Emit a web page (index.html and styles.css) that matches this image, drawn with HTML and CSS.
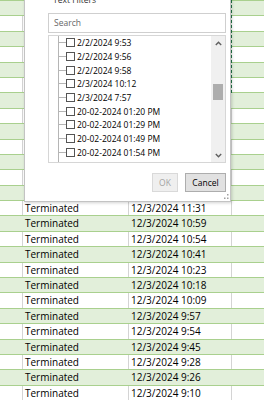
FILE: index.html
```html
<!DOCTYPE html>
<html lang="en">
<head>
  <meta charset="UTF-8">
  <title>Filter Status</title>
  <link rel="stylesheet" href="styles.css">
</head>
<body>
  <div class="sheet">
    <div class="row"><span></span><span></span><span></span><span></span></div>
    <div class="row band"><span></span><span></span><span></span><span></span></div>
    <div class="row"><span></span><span></span><span></span><span></span></div>
    <div class="row band"><span></span><span></span><span></span><span></span></div>
    <div class="row"><span></span><span></span><span></span><span></span></div>
    <div class="row band"><span></span><span></span><span></span><span></span></div>
    <div class="row"><span></span><span></span><span></span><span></span></div>
    <div class="row band"><span></span><span></span><span></span><span></span></div>
    <div class="row"><span></span><span></span><span></span><span></span></div>
    <div class="row band"><span></span><span></span><span></span><span></span></div>
    <div class="row"><span></span><span></span><span></span><span></span></div>
    <div class="row band"><span></span><span></span><span></span><span></span></div>
    <div class="row"><span></span><span></span><span></span><span></span></div>
    <div class="row band"><span></span><span></span><span></span><span></span></div>
    <div class="row"><span></span><span>Terminated</span><span>12/3/2024 11:31</span><span></span></div>
    <div class="row band"><span></span><span>Terminated</span><span>12/3/2024 10:59</span><span></span></div>
    <div class="row"><span></span><span>Terminated</span><span>12/3/2024 10:54</span><span></span></div>
    <div class="row band"><span></span><span>Terminated</span><span>12/3/2024 10:41</span><span></span></div>
    <div class="row"><span></span><span>Terminated</span><span>12/3/2024 10:23</span><span></span></div>
    <div class="row band"><span></span><span>Terminated</span><span>12/3/2024 10:18</span><span></span></div>
    <div class="row"><span></span><span>Terminated</span><span>12/3/2024 10:09</span><span></span></div>
    <div class="row band"><span></span><span>Terminated</span><span>12/3/2024 9:57</span><span></span></div>
    <div class="row"><span></span><span>Terminated</span><span>12/3/2024 9:54</span><span></span></div>
    <div class="row band"><span></span><span>Terminated</span><span>12/3/2024 9:45</span><span></span></div>
    <div class="row"><span></span><span>Terminated</span><span>12/3/2024 9:28</span><span></span></div>
    <div class="row band"><span></span><span>Terminated</span><span>12/3/2024 9:26</span><span></span></div>
    <div class="row"><span></span><span>Terminated</span><span>12/3/2024 9:10</span><span></span></div>
  </div>

  <div class="copy-ants"></div>

  <div class="filter-menu">
    <div class="menu-item">Text Filters</div>
    <div class="search-box">Search</div>

    <div class="value-list">
      <div class="tree">
        <div class="tree-item"><span class="check"></span>2/2/2024 9:53</div>
        <div class="tree-item"><span class="check"></span>2/2/2024 9:56</div>
        <div class="tree-item"><span class="check"></span>2/2/2024 9:58</div>
        <div class="tree-item"><span class="check"></span>2/3/2024 10:12</div>
        <div class="tree-item"><span class="check"></span>2/3/2024 7:57</div>
        <div class="tree-item"><span class="check"></span>20-02-2024 01:20 PM</div>
        <div class="tree-item"><span class="check"></span>20-02-2024 01:29 PM</div>
        <div class="tree-item"><span class="check"></span>20-02-2024 01:49 PM</div>
        <div class="tree-item"><span class="check"></span>20-02-2024 01:54 PM</div>
        <div class="tree-item"><span class="check"></span>20-02-2024 02:03 PM</div>
      </div>
      <div class="scrollbar">
        <div class="arrow">
          <svg width="7" height="5" viewBox="0 0 7 5"><polyline points="0.8,4 3.5,1.3 6.2,4" fill="none" stroke="#5f5f5f" stroke-width="1.4"/></svg>
        </div>
        <div class="track"><div class="thumb"></div></div>
        <div class="arrow">
          <svg width="7" height="5" viewBox="0 0 7 5"><polyline points="0.8,1 3.5,3.7 6.2,1" fill="none" stroke="#5f5f5f" stroke-width="1.4"/></svg>
        </div>
      </div>
    </div>

    <div class="buttons">
      <button class="btn-ok" disabled>OK</button>
      <button class="btn-cancel">Cancel</button>
    </div>

    <svg class="grip" width="6" height="6" viewBox="0 0 6 6">
      <rect x="4" y="0" width="1.5" height="1.5" fill="#a0a0a0"/>
      <rect x="1" y="3.5" width="1.5" height="1.5" fill="#a0a0a0"/>
      <rect x="4" y="3.5" width="1.5" height="1.5" fill="#a0a0a0"/>
    </svg>
  </div>
</body>
</html>
```

FILE: styles.css
```css
* {
  box-sizing: border-box;
}

body {
  margin: 0;
  width: 264px;
  height: 400px;
  overflow: hidden;
  position: relative;
  background-color: #fff;
  font-family: "Open Sans", "Noto Sans", sans-serif;
  color: #000;
}

/* worksheet */
.sheet {
  margin-top: -14.4px;
}

.row {
  display: grid;
  grid-template-columns: 22px 106px 103px 1fr;
  height: 15.4px;
  border-bottom: 1px solid #a9d08e;
  font-size: 10px;
  line-height: 14.4px;
}

.row span {
  border-left: 1px solid #d4d4d4;
  padding-left: 2px;
  white-space: nowrap;
  overflow: hidden;
}

.row span:first-child {
  border-left: none;
}

.row.band {
  background-color: #e2efda;
}

.row.band span {
  border-left-color: #e2efda;
}

.copy-ants {
  position: absolute;
  left: 230px;
  top: 0;
  width: 2px;
  height: 94px;
  background: repeating-linear-gradient(to bottom, #217346 0 3px, #e8f0e4 3px 5px);
}

/* filter dropdown */
.filter-menu {
  position: absolute;
  left: 24px;
  top: -9px;
  width: 207px;
  height: 211px;
  padding: 0 4px 0 23px;
  background-color: #fff;
  border: 1px solid #c3c3c3;
  box-shadow: 1px 1px 3px rgba(0, 0, 0, 0.18);
  font-size: 8.5px;
}

.menu-item {
  height: 16px;
  line-height: 16px;
  padding-left: 5px;
  color: #333;
}

.search-box {
  margin-top: 5px;
  height: 20px;
  line-height: 18px;
  padding-left: 5px;
  border: 1px solid #cfcfcf;
  color: #666;
}

.value-list {
  margin-top: 2px;
  height: 128px;
  display: flex;
  border: 1px solid #d6d6d6;
}

.tree {
  flex: 1;
  overflow: hidden;
  margin-left: 9px;
  border-left: 1px solid #b5b5b5;
}

.tree-item {
  display: flex;
  align-items: center;
  height: 13.7px;
  white-space: nowrap;
}

.tree-item::before {
  content: "";
  width: 7px;
  border-top: 1px solid #b5b5b5;
}

.check {
  width: 9px;
  height: 9px;
  margin-right: 2px;
  border: 1px solid #555;
  background-color: #fff;
  flex-shrink: 0;
}

.scrollbar {
  width: 14px;
  display: flex;
  flex-direction: column;
  background-color: #f0f0f0;
}

.arrow {
  height: 14px;
  display: flex;
  align-items: center;
  justify-content: center;
}

.track {
  flex: 1;
}

.thumb {
  width: 10px;
  height: 16px;
  margin: 34px auto 0;
  background-color: #adadad;
}

.buttons {
  margin-top: 10px;
  display: flex;
  justify-content: flex-end;
  gap: 7px;
}

.buttons button {
  height: 19px;
  padding: 0;
  font-family: inherit;
  font-size: 8.5px;
  border-radius: 0;
}

.btn-ok {
  width: 26px;
  background-color: #efefef;
  border: 1px solid #d9d9d9;
  color: #a3a3a3;
}

.btn-cancel {
  width: 41px;
  background-color: #e1e1e1;
  border: 1px solid #adadad;
  color: #000;
}

.grip {
  position: absolute;
  right: 1px;
  bottom: 1px;
}
```
